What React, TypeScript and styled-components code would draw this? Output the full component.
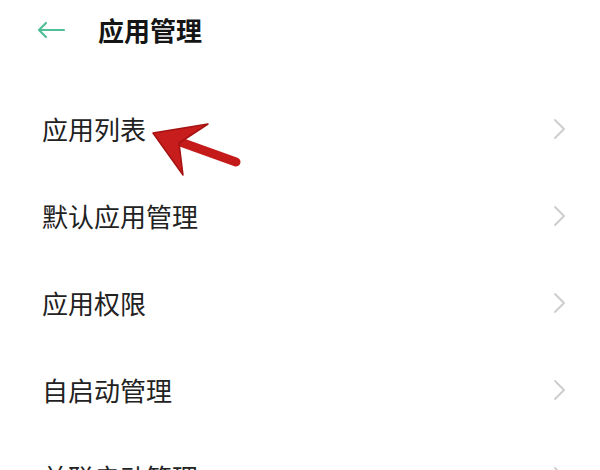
import styled, { createGlobalStyle } from "styled-components";

const GlobalStyle = createGlobalStyle`
  html, body {
    margin: 0;
    padding: 0;
    background: #ffffff;
  }
  body {
    font-family: "Noto Sans CJK SC", "Noto Sans", sans-serif;
    overflow: hidden;
  }
`;

const items = ["应用列表", "默认应用管理", "应用权限", "自启动管理", "关联启动管理"];

export default function App() {
  return (
    <>
      <GlobalStyle />
      <Screen>
        <Header>
          <BackButton aria-label="返回">
            <svg width="30" height="18" viewBox="0 0 30 18" fill="none">
              <path
                d="M28 9H3M10 2L3 9l7 7"
                stroke="#4fbf98"
                strokeWidth="2.2"
                strokeLinecap="round"
                strokeLinejoin="round"
              />
            </svg>
          </BackButton>
          <Title>应用管理</Title>
        </Header>
        <List>
          {items.map((label) => (
            <Row key={label}>
              <RowLabel>{label}</RowLabel>
              <Chevron viewBox="0 0 14 22" fill="none">
                <path
                  d="M2 2l9 9-9 9"
                  stroke="#cccccc"
                  strokeWidth="1.8"
                  strokeLinecap="round"
                  strokeLinejoin="round"
                />
              </Chevron>
            </Row>
          ))}
        </List>
        <Pointer viewBox="0 0 100 70" fill="none">
          <path
            d="M22 29 L86 52"
            stroke="#c41a1a"
            strokeWidth="9"
            strokeLinecap="round"
          />
          <path
            d="M3 23 L58 14 L29 33 L33 65 Z"
            fill="#c81d1d"
            stroke="#a51212"
            strokeWidth="1.5"
            strokeLinejoin="round"
          />
        </Pointer>
      </Screen>
    </>
  );
}

const Screen = styled.div`
  position: relative;
  width: 600px;
  height: 470px;
  overflow: hidden;
  background: #ffffff;
`;

const Header = styled.div`
  display: flex;
  align-items: center;
  height: 60px;
  padding-left: 36px;
`;

const BackButton = styled.div`
  display: flex;
  align-items: center;
  width: 62px;
`;

const Title = styled.div`
  font-size: 26px;
  font-weight: 700;
  color: #151515;
  line-height: 1;
`;

const List = styled.div`
  display: flex;
  flex-direction: column;
  margin-top: 25px;
`;

const Row = styled.div`
  display: flex;
  align-items: center;
  justify-content: space-between;
  height: 87px;
  padding: 0 33px 0 42px;
`;

const RowLabel = styled.div`
  font-size: 26px;
  color: #222222;
  line-height: 1;
`;

const Chevron = styled.svg`
  width: 14px;
  height: 22px;
`;

const Pointer = styled.svg`
  position: absolute;
  left: 150px;
  top: 110px;
  width: 100px;
  height: 70px;
  overflow: visible;
`;
